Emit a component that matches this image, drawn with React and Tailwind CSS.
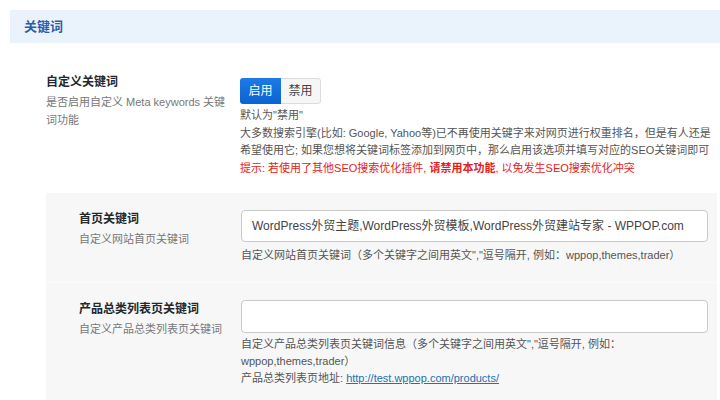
import React from 'react';

const font = { fontFamily: '"Liberation Sans", "Noto Sans CJK SC", sans-serif' };

// Left label column: title + grey description
const Label = ({ title, desc, className = '' }) => (
  <div className={`shrink-0 ${className}`}>
    <p className="text-[12px] font-bold text-[#23282d] leading-[18px]">{title}</p>
    <p className="text-[11px] text-[#777] leading-[18px] mt-[2px]">{desc}</p>
  </div>
);

export default function App() {
  return (
    <div className="w-[720px] h-[400px] overflow-hidden bg-white" style={font}>
      {/* section header */}
      <div className="ml-[10px] mt-[10px] h-[33px] bg-[#eaf2fb] flex items-center pl-[14px]">
        <h2 className="text-[13px] font-bold text-[#2b5ca8]">关键词</h2>
      </div>

      {/* 自定义关键词 */}
      <div className="flex ml-[46px] pt-[30px] pb-[16px]">
        <Label
          className="w-[194px] pr-[14px]"
          title="自定义关键词"
          desc={<>是否启用自定义 Meta keywords 关键<br />词功能</>}
        />
        <div className="flex-1 pt-[5px] whitespace-nowrap">
          <div className="inline-flex h-[26px] text-[12px] rounded-[3px] overflow-hidden">
            <button className="w-[41px] bg-gradient-to-b from-[#1d7be6] to-[#0b62d0] text-white">启用</button>
            <button className="w-[40px] bg-[#f6f6f6] border border-l-0 border-[#dcdcdc] rounded-r-[3px] text-[#444]">禁用</button>
          </div>
          <div className="text-[11px] leading-[17.5px] text-[#555] mt-[3px]">
            <p>默认为"禁用"</p>
            <p>
              大多数搜索引擎(比如: Google, Yahoo等)已不再使用关键字来对网页进行权重排名，但是有人还是
              <br />
              希望使用它; 如果您想将关键词标签添加到网页中，那么启用该选项并填写对应的SEO关键词即可
            </p>
            <p className="text-[#e3211b]">
              提示: 若使用了其他SEO搜索优化插件, <span className="font-bold">请禁用本功能</span>, 以免发生SEO搜索优化冲突
            </p>
          </div>
        </div>
      </div>

      {/* grey sub panel */}
      <div className="ml-[46px] mr-[3px] bg-[#f7f7f7]">
        <div className="flex pl-[33px] pt-[17px] pb-[18px] border-b border-[#fcfcfc]">
          <Label className="w-[162px]" title="首页关键词" desc="自定义网站首页关键词" />
          <div className="w-[467px] whitespace-nowrap">
            <div className="h-[32px] bg-white border border-[#c9c9c9] rounded-[4px] flex items-center px-[10px] text-[12px] text-[#444]">
              WordPress外贸主题,WordPress外贸模板,WordPress外贸建站专家 - WPPOP.com
            </div>
            <p className="text-[11px] leading-[17px] text-[#555] mt-[5px]">
              自定义网站首页关键词（多个关键字之间用英文","逗号隔开, 例如：wppop,themes,trader）
            </p>
          </div>
        </div>
        <div className="flex pl-[33px] pt-[17px] pb-[20px]">
          <Label className="w-[162px]" title="产品总类列表页关键词" desc="自定义产品总类列表页关键词" />
          <div className="w-[467px] whitespace-nowrap">
            <div className="h-[33px] bg-white border border-[#c9c9c9] rounded-[4px]" />
            <p className="text-[11px] leading-[17px] text-[#555] mt-[3px]">
              自定义产品总类列表页关键词信息（多个关键字之间用英文","逗号隔开, 例如：
              <br />
              wppop,themes,trader）
              <br />
              产品总类列表页地址: <a className="text-[#2271b1] underline">http://test.wppop.com/products/</a>
            </p>
          </div>
        </div>
      </div>
    </div>
  );
}
